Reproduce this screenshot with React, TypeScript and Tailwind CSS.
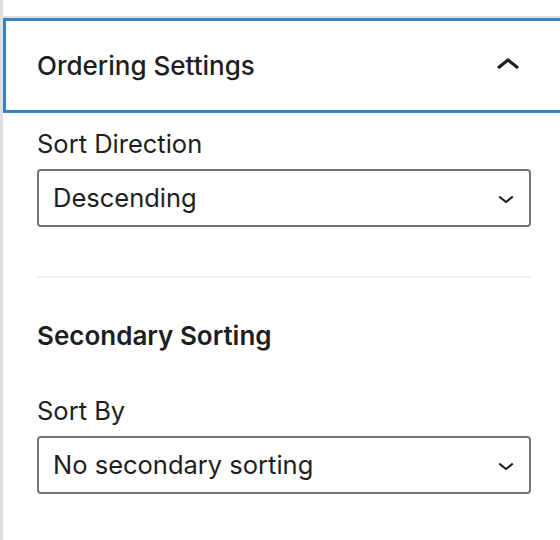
import React from 'react';

const ChevronUp = () => (
  <svg viewBox="0 0 24 24" className="h-12 w-12 fill-[#1e1e1e]">
    <path d="M6.5 12.4L12 8l5.5 4.4-.9 1.2L12 10l-4.5 3.6-1-1.2z" />
  </svg>
);

const ChevronDown = () => (
  <svg viewBox="0 0 24 24" className="h-8 w-8 fill-[#1e1e1e]">
    <path d="M17.5 11.6L12 16l-5.5-4.4.9-1.2L12 14l4.6-3.6 1 1.2z" />
  </svg>
);

const SelectField = ({ value }: { value: string }) => (
  <div className="flex h-[58px] items-center justify-between rounded-[4px] border-2 border-[#757575] bg-white pl-[14px] pr-[7px]">
    <span className="text-[25.5px] leading-[36px] text-[#1e1e1e]">{value}</span>
    <ChevronDown />
  </div>
);

export default function App() {
  return (
    <div className="w-[560px] overflow-hidden bg-white" style={{ fontFamily: 'Inter, "Noto Sans", sans-serif' }}>
      <div className="min-h-[540px] w-[565px] border-l-[3px] border-[#e0e0e0] pt-4">
        <div className="border-t-2 border-[#e0e0e0]">
          {/* panel header, focused */}
          <button className="flex h-[95px] w-full items-center justify-between border-[3px] border-[#3582c4] pl-[31px] pr-[30px] text-left">
            <span className="text-[26px] font-medium leading-[36px] text-[#1e1e1e]">Ordering Settings</span>
            <ChevronUp />
          </button>

          <div className="px-[34px]">
            <div className="mt-[15px] text-[25.5px] leading-[32px] text-[#1e1e1e]">Sort Direction</div>
            <div className="mt-[9px]">
              <SelectField value="Descending" />
            </div>

            <div className="mt-[49px] h-[2px] bg-[#f0f0f0]" />

            <div className="mt-[40px] text-[26px] font-semibold leading-[36px] text-[#1e1e1e]">Secondary Sorting</div>

            <div className="mt-[41px] text-[25.5px] leading-[32px] text-[#1e1e1e]">Sort By</div>
            <div className="mt-[9px]">
              <SelectField value="No secondary sorting" />
            </div>
          </div>
        </div>
      </div>
    </div>
  );
}
